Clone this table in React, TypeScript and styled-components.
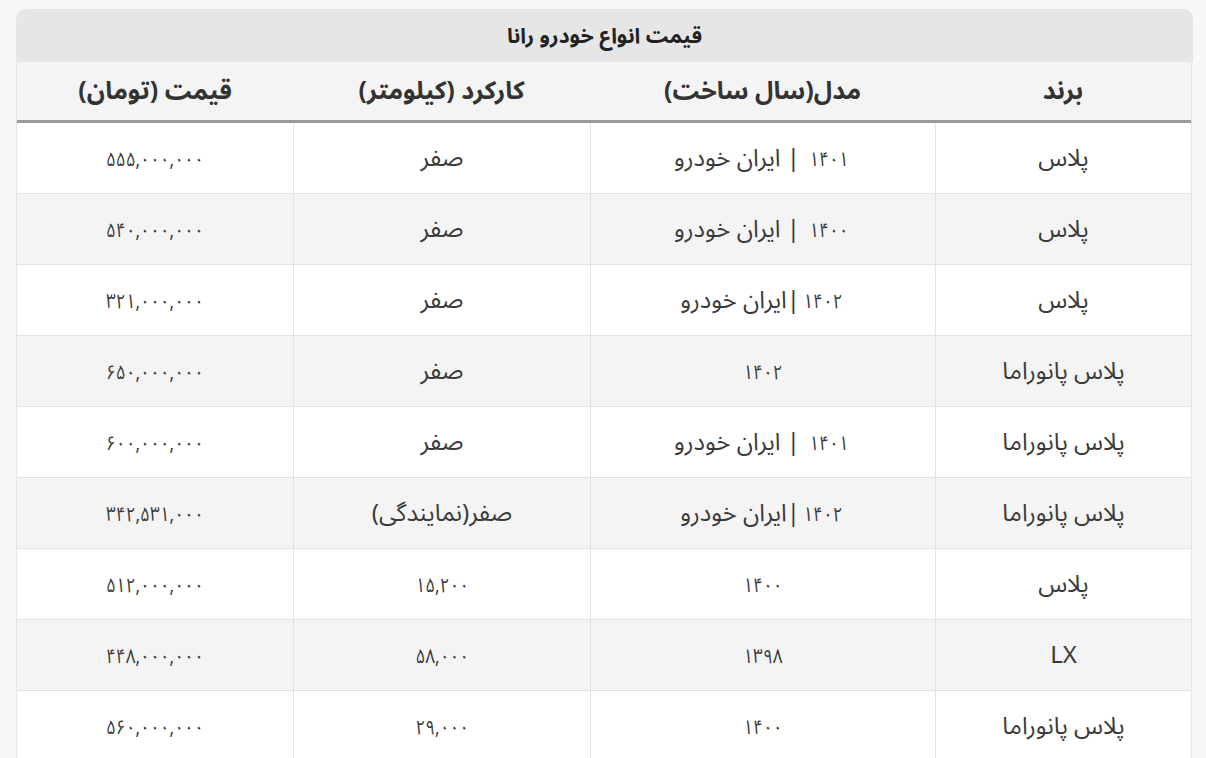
import React from "react";
import styled, { createGlobalStyle } from "styled-components";

const GlobalStyle = createGlobalStyle`
  html, body {
    margin: 0;
    padding: 0;
    background: #f8f8f8;
  }
  body {
    font-family: "Noto Sans Arabic", "DejaVu Sans", sans-serif;
    color: #333;
  }
  *, *::before, *::after {
    box-sizing: border-box;
  }
`;

const Page = styled.div`
  direction: rtl;
  padding: 9px 13px 0 16px;
  height: 758px;
  overflow: hidden;
`;

const Caption = styled.div`
  background: #e6e6e6;
  border-radius: 10px 10px 0 0;
  height: 53px;
  display: flex;
  align-items: center;
  justify-content: center;
  font-weight: 700;
  font-size: 21px;
  color: #222;
`;

const Table = styled.table`
  width: calc(100% - 2px);
  margin: 0 1px;
  border-collapse: separate;
  border-spacing: 0;
  table-layout: fixed;
  background: #fff;
  border-left: 1px solid #e4e4e4;
  border-right: 1px solid #e4e4e4;
`;

const HeadCell = styled.th<{ $w: number }>`
  width: ${(p) => p.$w}px;
  height: 61px;
  background: #f4f4f4;
  border-bottom: 3px solid #999;
  font-size: 25px;
  font-weight: 700;
  color: #333;
  text-align: center;
  padding: 0 10px;
`;

const Row = styled.tr<{ $alt: boolean }>`
  background: ${(p) => (p.$alt ? "#f4f4f4" : "#ffffff")};
`;

const Cell = styled.td`
  height: 71px;
  border-bottom: 1px solid #e2e2e2;
  border-left: 1px solid #e2e2e2;
  text-align: center;
  font-size: 24px;
  color: #3a3a3a;
  padding: 0 10px;
  &:last-child {
    border-left: none;
  }
`;

const Num = styled.span`
  display: inline-block;
  font-size: 20px;
  transform: scaleX(0.86);
`;

const columns = [
  { title: "برند", w: 256 },
  { title: "مدل(سال ساخت)", w: 345 },
  { title: "کارکرد (کیلومتر)", w: 297 },
  { title: "قیمت (تومان)", w: 276 },
];

const rows: string[][] = [
  ["پلاس", "۱۴۰۱ | ایران خودرو", "صفر", "۵۵۵,۰۰۰,۰۰۰"],
  ["پلاس", "۱۴۰۰ | ایران خودرو", "صفر", "۵۴۰,۰۰۰,۰۰۰"],
  ["پلاس", "۱۴۰۲|ایران خودرو", "صفر", "۳۲۱,۰۰۰,۰۰۰"],
  ["پلاس پانوراما", "۱۴۰۲", "صفر", "۶۵۰,۰۰۰,۰۰۰"],
  ["پلاس پانوراما", "۱۴۰۱ | ایران خودرو", "صفر", "۶۰۰,۰۰۰,۰۰۰"],
  ["پلاس پانوراما", "۱۴۰۲|ایران خودرو", "صفر(نمایندگی)", "۳۴۲,۵۳۱,۰۰۰"],
  ["پلاس", "۱۴۰۰", "۱۵,۲۰۰", "۵۱۲,۰۰۰,۰۰۰"],
  ["LX", "۱۳۹۸", "۵۸,۰۰۰", "۴۴۸,۰۰۰,۰۰۰"],
  ["پلاس پانوراما", "۱۴۰۰", "۲۹,۰۰۰", "۵۶۰,۰۰۰,۰۰۰"],
];

function renderText(v: string) {
  return v.split(/([۰-۹,]+)/).map((part, k) =>
    /^[۰-۹,]+$/.test(part) ? (
      <Num key={k}>{part}</Num>
    ) : (
      <React.Fragment key={k}>{part}</React.Fragment>
    )
  );
}

export default function App() {
  return (
    <>
      <GlobalStyle />
      <Page>
        <Caption>قیمت انواع خودرو رانا</Caption>
        <Table>
          <thead>
            <tr>
              {columns.map((c) => (
                <HeadCell key={c.title} $w={c.w}>
                  {c.title}
                </HeadCell>
              ))}
            </tr>
          </thead>
          <tbody>
            {rows.map((r, i) => (
              <Row key={i} $alt={i % 2 === 1}>
                {r.map((v, j) => (
                  <Cell key={j}>{renderText(v)}</Cell>
                ))}
              </Row>
            ))}
          </tbody>
        </Table>
      </Page>
    </>
  );
}
